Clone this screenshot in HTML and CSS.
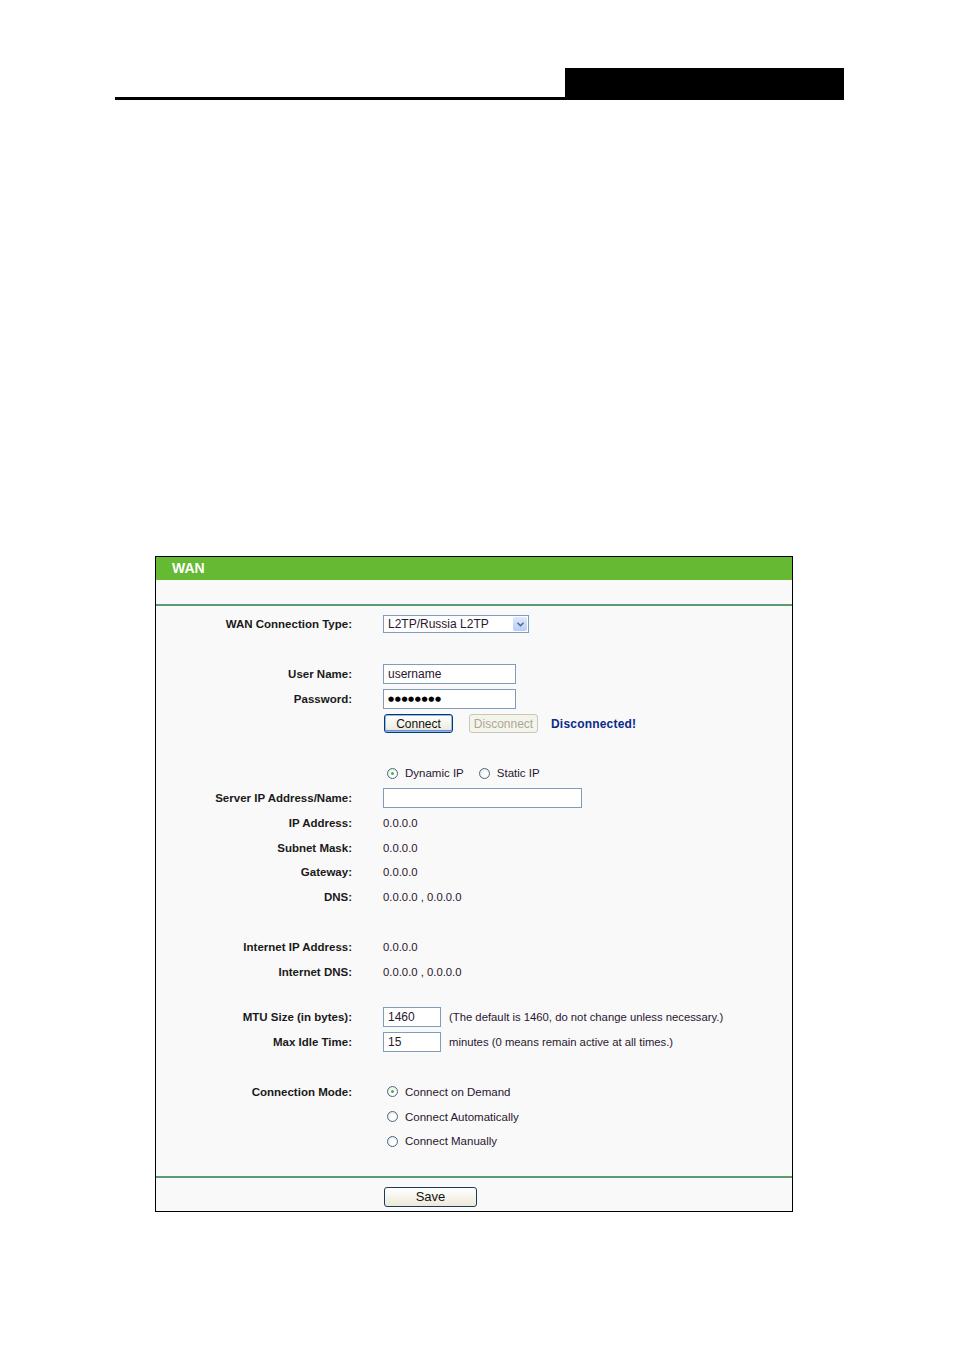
FILE: index.html
```html
<!DOCTYPE html>
<html lang="en">
<head>
    <meta charset="UTF-8">
    <title>WAN</title>
    <link rel="stylesheet" href="styles.css">
</head>
<body>
    <div class="topo">
        <div class="topo-linha"></div>
        <div class="topo-bloco"></div>
    </div>

    <div class="painel">
        <div class="painel-titulo">WAN</div>
        <div class="painel-faixa"></div>

        <div class="form">
            <div class="linha">
                <span class="rotulo">WAN Connection Type:</span>
                <div class="select">
                    <span>L2TP/Russia L2TP</span>
                    <span class="seta">
                        <svg width="7" height="5" viewBox="0 0 7 5"><path d="M0.5 0.8 L3.5 3.8 L6.5 0.8" fill="none" stroke="#4d6185" stroke-width="1.4"/></svg>
                    </span>
                </div>
            </div>
            <div class="linha"></div>
            <div class="linha">
                <span class="rotulo">User Name:</span>
                <div class="campo campo-medio">username</div>
            </div>
            <div class="linha">
                <span class="rotulo">Password:</span>
                <div class="campo campo-medio senha">&#9679;&#9679;&#9679;&#9679;&#9679;&#9679;&#9679;&#9679;</div>
            </div>
            <div class="linha">
                <span class="rotulo"></span>
                <div class="acoes">
                    <button class="botao botao-ativo">Connect</button>
                    <button class="botao" disabled>Disconnect</button>
                    <span class="status">Disconnected!</span>
                </div>
            </div>
            <div class="linha"></div>
            <div class="linha">
                <span class="rotulo"></span>
                <div class="opcoes">
                    <span class="radio marcado"></span><span class="opcao">Dynamic IP</span>
                    <span class="radio espaco"></span><span class="opcao">Static IP</span>
                </div>
            </div>
            <div class="linha">
                <span class="rotulo">Server IP Address/Name:</span>
                <div class="campo campo-largo"></div>
            </div>
            <div class="linha">
                <span class="rotulo">IP Address:</span>
                <span class="valor">0.0.0.0</span>
            </div>
            <div class="linha">
                <span class="rotulo">Subnet Mask:</span>
                <span class="valor">0.0.0.0</span>
            </div>
            <div class="linha">
                <span class="rotulo">Gateway:</span>
                <span class="valor">0.0.0.0</span>
            </div>
            <div class="linha">
                <span class="rotulo">DNS:</span>
                <span class="valor">0.0.0.0 , 0.0.0.0</span>
            </div>
            <div class="linha"></div>
            <div class="linha">
                <span class="rotulo">Internet IP Address:</span>
                <span class="valor">0.0.0.0</span>
            </div>
            <div class="linha">
                <span class="rotulo">Internet DNS:</span>
                <span class="valor">0.0.0.0 , 0.0.0.0</span>
            </div>
            <div class="linha linha-curta"></div>
            <div class="linha">
                <span class="rotulo">MTU Size (in bytes):</span>
                <div class="acoes">
                    <div class="campo campo-curto">1460</div>
                    <span class="valor">(The default is 1460, do not change unless necessary.)</span>
                </div>
            </div>
            <div class="linha">
                <span class="rotulo">Max Idle Time:</span>
                <div class="acoes">
                    <div class="campo campo-curto">15</div>
                    <span class="valor">minutes (0 means remain active at all times.)</span>
                </div>
            </div>
            <div class="linha"></div>
            <div class="linha">
                <span class="rotulo">Connection Mode:</span>
                <div class="opcoes">
                    <span class="radio marcado"></span><span class="opcao">Connect on Demand</span>
                </div>
            </div>
            <div class="linha">
                <span class="rotulo"></span>
                <div class="opcoes">
                    <span class="radio"></span><span class="opcao">Connect Automatically</span>
                </div>
            </div>
            <div class="linha">
                <span class="rotulo"></span>
                <div class="opcoes">
                    <span class="radio"></span><span class="opcao">Connect Manually</span>
                </div>
            </div>
        </div>

        <div class="painel-faixa painel-faixa-baixo"></div>
        <div class="rodape">
            <button class="botao botao-salvar">Save</button>
        </div>
    </div>
</body>
</html>
```

FILE: styles.css
```css
:root{
    --verde: #66b933;
    --verde-linha: #5d9a70;
    --fundo-painel: #f9f9f9;
    --borda-campo: #7f9db9;
    --texto: #1a1a1a;
}

body{
    margin: 0;
    background-color: #fff;
    font-family: "Liberation Sans", Arial, sans-serif;
    color: var(--texto);
}

.topo{
    display: flex;
    align-items: flex-end;
    margin: 68px 0 0 115px;
    width: 729px;
}

.topo-linha{
    flex: 1;
    height: 3px;
    background-color: #000;
}

.topo-bloco{
    width: 279px;
    height: 32px;
    background-color: #000;
}

.painel{
    margin: 456px 0 0 155px;
    width: 636px;
    border: 1px solid #000;
    background-color: var(--fundo-painel);
}

.painel-titulo{
    height: 23px;
    line-height: 23px;
    padding-left: 16px;
    background-color: var(--verde);
    color: #fff;
    font-size: 14px;
    font-weight: bold;
}

.painel-faixa{
    margin-top: 24px;
    height: 2px;
    background-color: var(--verde-linha);
}

.form{
    padding-top: 6px;
}

.linha{
    display: grid;
    grid-template-columns: 196px 1fr;
    column-gap: 31px;
    align-items: center;
    height: 24.8px;
    font-size: 11.5px;
}

.linha-curta{
    height: 21px;
}

.rotulo{
    text-align: right;
    font-weight: bold;
}

.valor{
    color: #2a1630;
    font-size: 11.3px;
}

.select{
    display: flex;
    align-items: center;
    justify-content: space-between;
    width: 139px;
    height: 16px;
    padding: 0 1px 0 4px;
    border: 1px solid var(--borda-campo);
    background-color: #fff;
    font-size: 12px;
    color: #2a1630;
}

.seta{
    display: flex;
    align-items: center;
    justify-content: center;
    width: 14px;
    height: 14px;
    border-radius: 2px;
    background: linear-gradient(#dfe8fd, #b9cdf8);
}

.campo{
    box-sizing: border-box;
    height: 20px;
    line-height: 18px;
    padding-left: 4px;
    border: 1px solid var(--borda-campo);
    background-color: #fff;
    font-size: 12px;
    color: #2a1630;
}

.campo-medio{ width: 133px; }
.campo-largo{ width: 199px; }
.campo-curto{ width: 58px; }

.senha{
    font-family: "DejaVu Sans", sans-serif;
    font-size: 7px;
    letter-spacing: 0.6px;
    color: #000;
}

.acoes{
    display: flex;
    align-items: center;
    gap: 8px;
}

.botao{
    box-sizing: border-box;
    height: 19px;
    width: 69px;
    padding: 0;
    border: 1px solid #003c74;
    border-radius: 3px;
    background: linear-gradient(#ffffff, #ece9d8);
    font-family: "Liberation Sans", Arial, sans-serif;
    font-size: 12px;
    color: #111;
}

.botao-ativo{
    margin-left: 1px;
    box-shadow: inset 0 0 0 1px #97b9ea, inset 0 -1px 0 1px #6d8fd8;
}

.botao:disabled{
    margin-left: 8px;
    border-color: #c9c7ba;
    background: #f5f4ea;
    color: #aca899;
}

.status{
    margin-left: 5px;
    color: #0b2a8a;
    font-weight: bold;
    font-size: 12px;
    letter-spacing: 0.2px;
}

.opcoes{
    display: flex;
    align-items: center;
    padding-left: 4px;
    color: #2a1630;
    font-size: 11.5px;
}

.radio{
    box-sizing: border-box;
    width: 11px;
    height: 11px;
    border: 1px solid #4a6884;
    border-radius: 50%;
    background: radial-gradient(circle at 60% 60%, #fff 30%, #dcdcd6 100%);
    position: relative;
}

.radio.marcado::after{
    content: "";
    position: absolute;
    left: 3px;
    top: 3px;
    width: 3px;
    height: 3px;
    border-radius: 50%;
    background-color: #3cb63c;
}

.radio.espaco{
    margin-left: 15px;
}

.opcao{
    margin-left: 7px;
}

.painel-faixa-baixo{
    margin-top: 22px;
}

.rodape{
    display: flex;
    padding: 9px 0 4px 228px;
}

.botao-salvar{
    width: 93px;
    height: 20px;
    border-color: #1c3a5c;
    font-size: 13px;
}
```
